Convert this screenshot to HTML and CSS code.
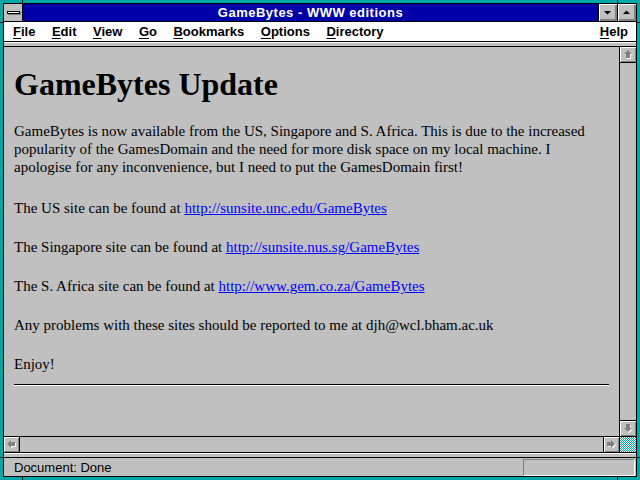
FILE: index.html
```html
<!DOCTYPE html>
<html lang="en">
<head>
  <meta charset="UTF-8">
  <title>GameBytes - WWW editions</title>
  <link rel="stylesheet" href="styles.css">
</head>
<body>
  <div class="window">
    <div class="frame">
      <div class="titlebar">
        <div class="sysmenu"><span class="sysbar"></span></div>
        <div class="title">GameBytes - WWW editions</div>
        <div class="winbtn">
          <svg width="18" height="17" viewBox="0 0 18 17"><polygon points="5,7 12,7 8.5,10.5" fill="#000"/></svg>
        </div>
        <div class="winbtn">
          <svg width="18" height="17" viewBox="0 0 18 17"><polygon points="5,10 12,10 8.5,6.5" fill="#000"/></svg>
        </div>
      </div>

      <div class="menubar">
        <span class="item"><u>F</u>ile</span>
        <span class="item"><u>E</u>dit</span>
        <span class="item"><u>V</u>iew</span>
        <span class="item"><u>G</u>o</span>
        <span class="item"><u>B</u>ookmarks</span>
        <span class="item"><u>O</u>ptions</span>
        <span class="item"><u>D</u>irectory</span>
        <span class="item help"><u>H</u>elp</span>
      </div>

      <div class="ridge"></div>

      <div class="view">
        <div class="page">
          <h1>GameBytes Update</h1>
          <p class="intro">GameBytes is now available from the US, Singapore and S. Africa. This is due to the increased<br>
          popularity of the GamesDomain and the need for more disk space on my local machine. I<br>
          apologise for any inconvenience, but I need to put the GamesDomain first!</p>
          <p>The US site can be found at <a href="#">http://sunsite.unc.edu/GameBytes</a></p>
          <p>The Singapore site can be found at <a href="#">http://sunsite.nus.sg/GameBytes</a></p>
          <p>The S. Africa site can be found at <a href="#">http://www.gem.co.za/GameBytes</a></p>
          <p>Any problems with these sites should be reported to me at djh@wcl.bham.ac.uk</p>
          <p>Enjoy!</p>
          <hr>
        </div>
        <div class="vscroll">
          <div class="sbtn up">
            <svg width="16" height="15" viewBox="0 0 16 15">
              <polygon points="8,3 12,7 10,7 10,11 6,11 6,7 4,7" fill="#fff" transform="translate(1 1)"/>
              <polygon points="8,3 12,7 10,7 10,11 6,11 6,7 4,7" fill="#808080"/>
            </svg>
          </div>
          <div class="track"></div>
          <div class="sbtn down">
            <svg width="16" height="15" viewBox="0 0 16 15">
              <polygon points="8,11 12,7 10,7 10,3 6,3 6,7 4,7" fill="#fff" transform="translate(1 1)"/>
              <polygon points="8,11 12,7 10,7 10,3 6,3 6,7 4,7" fill="#808080"/>
            </svg>
          </div>
        </div>
      </div>

      <div class="hrow">
        <div class="hscroll">
          <div class="sbtn left">
            <svg width="15" height="15" viewBox="0 0 15 15">
              <polygon points="3,7 7,3 7,5 11,5 11,9 7,9 7,11" fill="#fff" transform="translate(1 1)"/>
              <polygon points="3,7 7,3 7,5 11,5 11,9 7,9 7,11" fill="#808080"/>
            </svg>
          </div>
          <div class="track"></div>
          <div class="sbtn right">
            <svg width="15" height="15" viewBox="0 0 15 15">
              <polygon points="11,7 7,3 7,5 3,5 3,9 7,9 7,11" fill="#fff" transform="translate(1 1)"/>
              <polygon points="11,7 7,3 7,5 3,5 3,9 7,9 7,11" fill="#808080"/>
            </svg>
          </div>
        </div>
        <div class="corner"></div>
      </div>

      <div class="ridge"></div>

      <div class="status">
        <span class="statustext">Document: Done</span>
        <div class="progress"></div>
      </div>
    </div>
  </div>
</body>
</html>
```

FILE: styles.css
```css
body {
  margin: 0;
  font-family: 'Liberation Sans', Arial, sans-serif;
}

.window {
  position: relative;
  width: 640px;
  height: 480px;
  box-sizing: border-box;
  border: 3px solid #00a8a8;
  background: #c0c0c0;
}

/* resize-corner ticks in the frame border */
.window::before {
  content: "";
  position: absolute;
  top: -3px;
  left: 19px;
  width: 1px;
  height: 3px;
  background: #000;
  box-shadow: 595px 0 0 #000, 0 477px 0 #000, 595px 477px 0 #000;
}

.window::after {
  content: "";
  position: absolute;
  top: 19px;
  left: -3px;
  width: 3px;
  height: 1px;
  background: #000;
  box-shadow: 637px 0 0 #000, 0 435px 0 #000, 637px 435px 0 #000;
}

.frame {
  height: 100%;
  box-sizing: border-box;
  border: 1px solid #000;
  display: flex;
  flex-direction: column;
}

/* title bar */
.titlebar {
  height: 17px;
  border-bottom: 1px solid #000;
  background: #0000a8;
  display: flex;
}

.sysmenu {
  width: 18px;
  background: #c0c0c0;
  border-right: 1px solid #000;
  display: flex;
  align-items: center;
  justify-content: center;
}

.sysbar {
  width: 11px;
  height: 1px;
  background: #fff;
  border: 1px solid #000;
  box-shadow: 1px 1px 0 #808080;
}

.title {
  flex: 1;
  color: #fff;
  font-weight: bold;
  font-size: 13px;
  letter-spacing: 0.5px;
  line-height: 17px;
  text-align: center;
}

.winbtn {
  width: 18px;
  background: #c0c0c0;
  border-left: 1px solid #000;
  box-shadow: inset 1px 1px 0 #fff, inset -2px -2px 0 #808080;
}

.winbtn svg {
  display: block;
}

/* menu bar */
.menubar {
  height: 19px;
  border-bottom: 1px solid #000;
  background: #fff;
  display: flex;
  align-items: center;
  padding-left: 9px;
  padding-right: 8px;
  font-size: 13px;
  font-weight: bold;
  color: #000;
}

.item {
  padding: 0 8px 0 0;
  margin-right: 8.5px;
  line-height: 19px;
}

.item u {
  text-underline-offset: 2px;
}

.help {
  margin-left: auto;
  margin-right: 0;
  padding-right: 0;
}

.ridge {
  height: 3px;
  border-top: 1px solid #fff;
  border-bottom: 1px solid #000;
  background: #c0c0c0;
}

/* document view */
.view {
  height: 389px;
  display: flex;
}

.page {
  flex: 1;
  padding: 0 10px;
  overflow: hidden;
  font-family: 'Liberation Serif', 'Times New Roman', serif;
  color: #000;
}

.page h1 {
  font-size: 32px;
  line-height: 36px;
  margin: 19px 0 20px;
}

.page p {
  font-size: 15px;
  line-height: 18px;
  margin: 0 0 21px;
}

.page p.intro {
  margin-bottom: 23px;
}

.page a {
  color: #0000ff;
}

.page hr {
  margin: -10px 0 0;
  border: 0;
  height: 1px;
  background: #000;
  border-bottom: 1px solid #fff;
}

.vscroll {
  width: 16px;
  border-left: 1px solid #000;
  display: flex;
  flex-direction: column;
}

.track {
  flex: 1;
  background: #c0c0c0;
}

.sbtn {
  background: #c0c0c0;
  box-shadow: inset 1px 1px 0 #fff, inset -1px -1px 0 #808080;
}

.sbtn svg {
  display: block;
}

.sbtn.up {
  height: 15px;
  border-bottom: 1px solid #000;
}

.sbtn.down {
  height: 15px;
  border-top: 1px solid #000;
}

/* horizontal scroll row */
.hrow {
  height: 15px;
  border-top: 1px solid #000;
  border-bottom: 1px solid #000;
  display: flex;
}

.hscroll {
  flex: 1;
  display: flex;
}

.sbtn.left {
  width: 15px;
  border-right: 1px solid #000;
}

.sbtn.right {
  width: 15px;
  border-left: 1px solid #000;
}

.corner {
  width: 16px;
  border-left: 1px solid #000;
  background: repeating-conic-gradient(#00a8a8 0 25%, #fff 0 50%) 0 0 / 2px 2px;
}

/* status bar */
.status {
  flex: 1;
  display: flex;
  align-items: center;
  padding: 0 1px 0 10px;
  font-size: 13px;
}

.statustext {
  flex: 1;
}

.progress {
  width: 110px;
  height: 15px;
  border-top: 1px solid #808080;
  border-left: 1px solid #808080;
  border-right: 1px solid #fff;
  border-bottom: 1px solid #fff;
}
```
